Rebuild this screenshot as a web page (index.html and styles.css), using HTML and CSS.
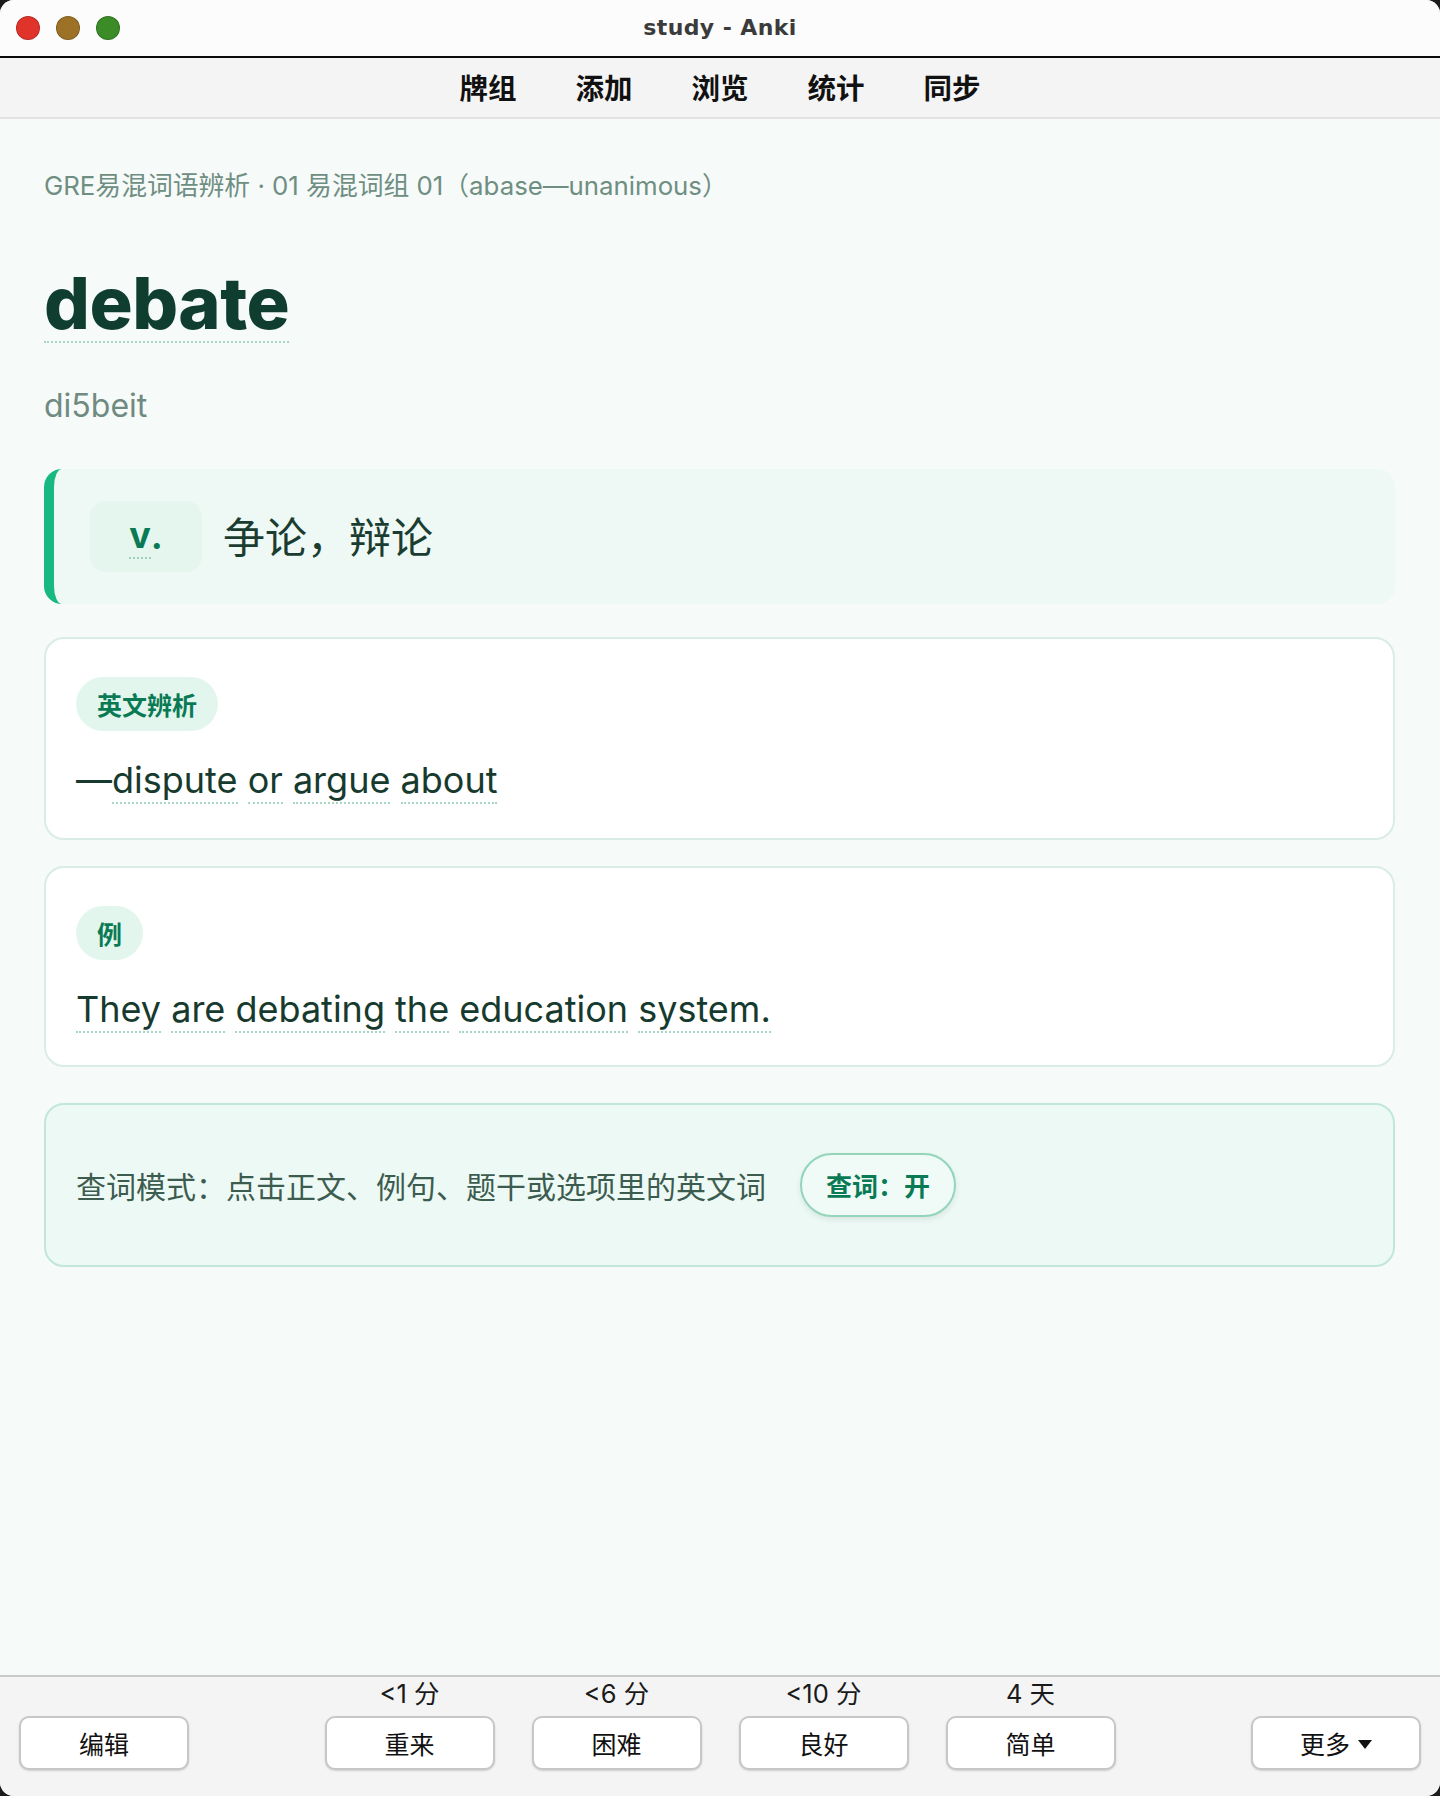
FILE: index.html
```html
<!DOCTYPE html>
<html lang="zh-CN">
<head>
<meta charset="UTF-8" />
<meta name="viewport" content="width=device-width, initial-scale=1" />
<title>study - Anki</title>
<link rel="stylesheet" href="styles.css">
</head>
<body>
  <div class="window">
    <header class="titlebar">
      <div class="lights">
        <span class="light red"></span>
        <span class="light yellow"></span>
        <span class="light green"></span>
      </div>
      <div class="title">study - Anki</div>
      <div></div>
    </header>

    <nav class="toolbar">
      <a href="#">牌组</a>
      <a href="#">添加</a>
      <a href="#">浏览</a>
      <a href="#">统计</a>
      <a href="#">同步</a>
    </nav>

    <main class="reviewer">
      <div class="crumb">GRE易混词语辨析 · 01 易混词组 01（abase—unanimous）</div>
      <h1 class="headword">debate</h1>
      <div class="phonetic">di5beit</div>

      <div class="meaning">
        <span class="pos"><span class="w">v</span>.</span>
        <span class="gloss">争论，辩论</span>
      </div>

      <section class="card">
        <div class="tag">英文辨析</div>
        <p class="text">—<span class="w">dispute</span> <span class="w">or</span> <span class="w">argue</span> <span class="w">about</span></p>
      </section>

      <section class="card">
        <div class="tag">例</div>
        <p class="text"><span class="w">They</span> <span class="w">are</span> <span class="w">debating</span> <span class="w">the</span> <span class="w">education</span> <span class="w">system.</span></p>
      </section>

      <section class="lookup">
        <span class="hint">查词模式：点击正文、例句、题干或选项里的英文词</span>
        <button class="toggle" type="button">查词：开</button>
      </section>
    </main>

    <footer class="answerbar">
      <div class="side">
        <button class="btn" type="button">编辑</button>
      </div>
      <div class="answers">
        <div class="ans"><span class="due">&lt;1 分</span><button class="btn" type="button">重来</button></div>
        <div class="ans"><span class="due">&lt;6 分</span><button class="btn" type="button">困难</button></div>
        <div class="ans"><span class="due">&lt;10 分</span><button class="btn" type="button">良好</button></div>
        <div class="ans"><span class="due">4 天</span><button class="btn" type="button">简单</button></div>
      </div>
      <div class="side right">
        <button class="btn" type="button">更多
          <svg class="caret" width="14" height="9" viewBox="0 0 14 9"><path d="M0 0h14L7 9z" fill="#111"/></svg>
        </button>
      </div>
    </footer>
  </div>
</body>
</html>
```

FILE: styles.css
```css
html, body {
  margin: 0; height: 100%;
  background: #1c1c1e;
}
body {
  font-family: Inter, "Noto Sans CJK SC", sans-serif;
}
.window {
  height: 100vh; display: flex; flex-direction: column;
  border-radius: 14px; overflow: hidden;
  background: #f6faf9;
}

/* title bar */
.titlebar {
  height: 56px; flex-shrink: 0;
  display: grid; grid-template-columns: 1fr auto 1fr; align-items: center;
  background: #fcfcfc; border-bottom: 2px solid #0b0b0b;
}
.lights {
  display: flex; gap: 16px; padding-left: 16px;
}
.light {
  width: 22px; height: 22px; border-radius: 50%;
  border: 1px solid rgba(0,0,0,0.18);
}
.light.red { background: #e0342b; }
.light.yellow { background: #9d7226; }
.light.green { background: #3b8b27; }
.title {
  font-family: "DejaVu Sans", sans-serif;
  font-size: 22px; font-weight: 600; color: #3b3b3b;
  letter-spacing: 0.4px; margin-top: -2px;
}

/* toolbar */
.toolbar {
  height: 61px; flex-shrink: 0; box-sizing: border-box; padding-bottom: 2px;
  display: flex; justify-content: center; align-items: center; gap: 59px;
  background: #f4f4f4; border-bottom: 2px solid #e2e2e2;
}
.toolbar a {
  font-family: "Noto Sans CJK SC", sans-serif;
  font-size: 28.5px; font-weight: 700; color: #111;
  text-decoration: none;
}

/* card area */
.reviewer {
  flex: 1; padding: 48px 45px 0 44px;
}
.crumb {
  font-size: 25.8px; line-height: 38px; color: #6f8e82;
}
.headword {
  margin: 60px 0 0; width: fit-content;
  font-size: 72px; font-weight: 800; line-height: 1.05;
  letter-spacing: -0.5px; color: #0f3e30;
  border-bottom: 2px dotted #a9d3c3;
}
.phonetic {
  margin-top: 39px;
  font-size: 32px; line-height: 48px; color: #6f8a80;
}
.meaning {
  margin-top: 39px;
  display: flex; align-items: center; gap: 21px;
  padding: 32px 36px;
  background: #eef8f4;
  border-left: 10px solid #18b981; border-radius: 18px;
}
.pos {
  width: 112px; height: 71px;
  display: flex; justify-content: center; align-items: center;
  background: #e4f6ee; border-radius: 16px;
  font-size: 36px; font-weight: 700; color: #0a7a55;
}
.pos .w {
  border-bottom: 2px dotted #9fd2be;
}
.gloss {
  font-family: "Noto Sans CJK SC", sans-serif;
  font-size: 42px; color: #1b3d31; margin-top: -3px;
}

.card {
  margin-top: 33px;
  padding: 38px 30px 31px;
  background: #fff;
  border: 2px solid #d9ece5; border-radius: 20px;
}
.card + .card {
  margin-top: 26px;
  padding-bottom: 29px;
}
.tag {
  display: inline-flex; align-items: center;
  height: 54px; padding: 0 21px;
  background: #e3f6ee; border-radius: 27px;
  font-family: "Noto Sans CJK SC", sans-serif;
  font-size: 25px; font-weight: 700; color: #0a7a55;
}
.text {
  margin: 22px 0 0;
  font-size: 36px; line-height: 54px; color: #173a2e;
}
.text .w {
  border-bottom: 2px dotted #a8d6c5;
}

.lookup {
  margin-top: 36px;
  display: flex; align-items: center; gap: 34px;
  padding: 48px 30px;
  background: #edf9f4;
  border: 2px solid #c0e7d7; border-radius: 20px;
}
.hint {
  font-family: "Noto Sans CJK SC", sans-serif;
  font-size: 30px; color: #3d5c50;
}
.toggle {
  height: 64px; padding: 0 24px;
  background: #f0faf6;
  border: 2px solid #92d5bb; border-radius: 32px;
  box-shadow: 0 3px 6px rgba(0,0,0,0.08);
  font-family: "Noto Sans CJK SC", sans-serif;
  font-size: 26px; font-weight: 700; color: #0a7a55;
  cursor: pointer;
}

/* answer bar */
.answerbar {
  flex-shrink: 0;
  display: grid; grid-template-columns: 1fr auto 1fr; align-items: end;
  padding: 5px 19px 26px;
  background: #f4f4f4; border-top: 2px solid #c8c8c8;
}
.side.right {
  display: flex; justify-content: flex-end;
}
.answers {
  display: flex; gap: 37px;
}
.ans {
  display: flex; flex-direction: column; align-items: center; gap: 10px;
}
.due {
  font-size: 25.5px; line-height: 24px; color: #1a1a1a;
}
.btn {
  width: 170px; height: 54px;
  display: flex; justify-content: center; align-items: center; gap: 8px;
  background: #fff;
  border: 2px solid #c7c7c7; border-radius: 10px;
  box-shadow: 0 1px 2px rgba(0,0,0,0.15);
  font-family: Inter, "Noto Sans CJK SC", sans-serif;
  font-size: 25px; color: #111;
  cursor: pointer;
}
.caret {
  margin-top: 2px;
}
```
